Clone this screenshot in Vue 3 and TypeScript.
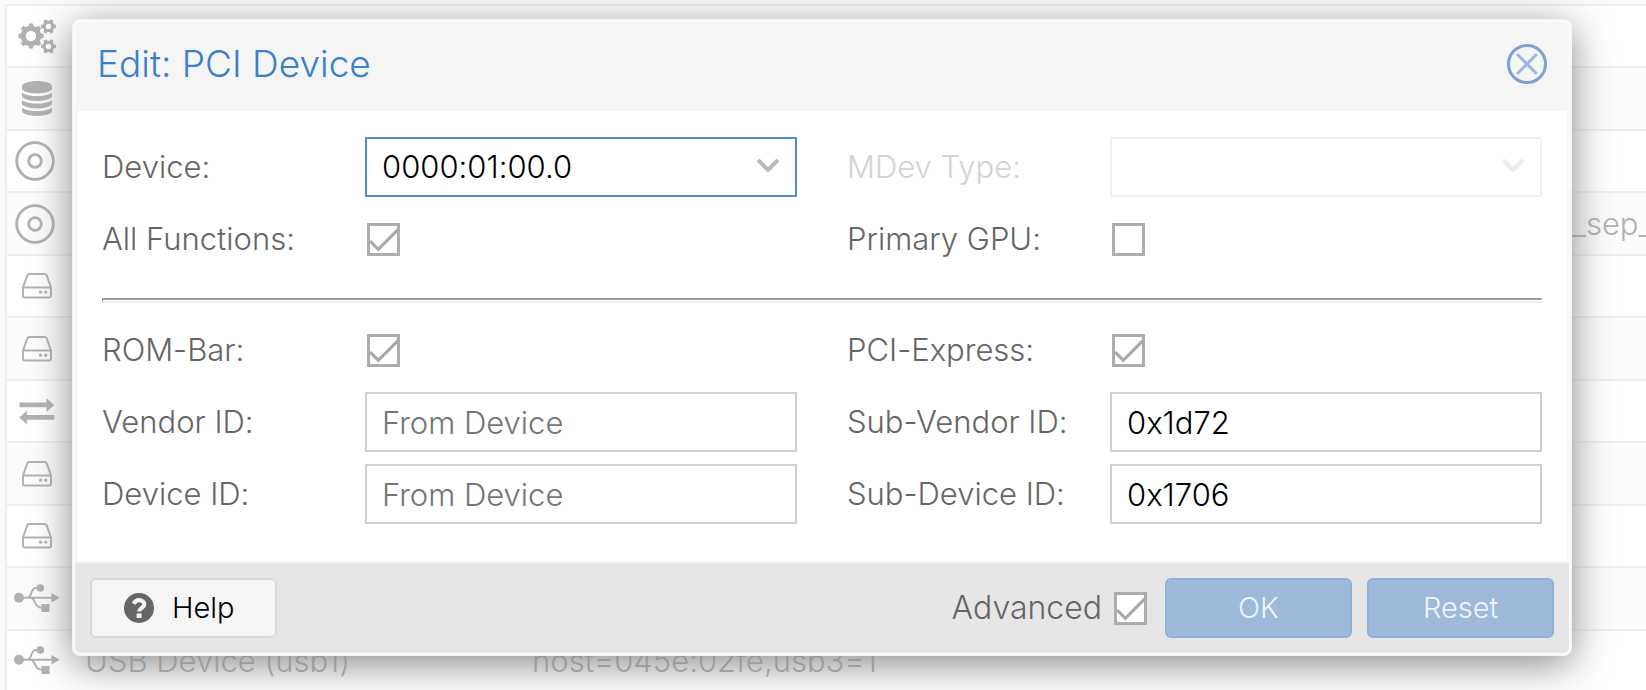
<script setup lang="ts">
import { reactive } from 'vue'

type IconName = 'gears' | 'database' | 'disc' | 'disk' | 'network' | 'usb'

interface HardwareRow {
  icon: IconName
  name?: string
  value?: string
  tail?: string
}

interface Gear {
  cx: number
  cy: number
  outer: number
  inner: number
  hole: number
  teeth: number
}

const rows: HardwareRow[] = [
  { icon: 'gears' },
  { icon: 'database' },
  { icon: 'disc' },
  { icon: 'disc', tail: '_sep_' },
  { icon: 'disk' },
  { icon: 'disk' },
  { icon: 'network' },
  { icon: 'disk' },
  { icon: 'disk' },
  { icon: 'usb' },
  { icon: 'usb', name: 'USB Device (usb1)', value: 'host=045e:02fe,usb3=1' },
]

const gears: Gear[] = [
  { cx: 13, cy: 17, outer: 12.7, inner: 10.3, hole: 5.2, teeth: 8 },
  { cx: 30.5, cy: 7.4, outer: 7.6, inner: 5.8, hole: 2.7, teeth: 6 },
  { cx: 30.5, cy: 27.4, outer: 7.6, inner: 5.8, hole: 2.7, teeth: 6 },
]

function gearPath(g: Gear): string {
  const step = (Math.PI * 2) / g.teeth
  const points: string[] = []
  for (let i = 0; i < g.teeth; i++) {
    const a = i * step
    const corners: [number, number][] = [
      [g.inner, a - step * 0.3],
      [g.outer, a - step * 0.2],
      [g.outer, a + step * 0.2],
      [g.inner, a + step * 0.3],
    ]
    for (const [r, t] of corners) {
      points.push(`${(g.cx + r * Math.cos(t)).toFixed(2)} ${(g.cy + r * Math.sin(t)).toFixed(2)}`)
    }
  }
  const h = g.hole
  return `M${points.join('L')}ZM${g.cx - h} ${g.cy}a${h} ${h} 0 1 0 ${2 * h} 0a${h} ${h} 0 1 0 ${-2 * h} 0Z`
}

const form = reactive({
  device: '0000:01:00.0',
  mdev: '',
  allFunctions: true,
  primaryGpu: false,
  romBar: true,
  pciExpress: true,
  vendorId: '',
  subVendorId: '0x1d72',
  deviceId: '',
  subDeviceId: '0x1706',
  advanced: true,
})
</script>

<template>
  <div class="page">
    <div class="hardware" aria-hidden="true">
      <div v-for="(row, i) in rows" :key="i" class="hw-row">
        <span class="hw-icon">
          <svg v-if="row.icon === 'gears'" width="38" height="35" viewBox="0 0 38 35">
            <path v-for="(g, n) in gears" :key="n" :d="gearPath(g)" fill="currentColor" fill-rule="evenodd" />
          </svg>
          <svg v-else-if="row.icon === 'database'" width="30" height="35" viewBox="0 0 1536 1792">
            <path
              fill="currentColor"
              d="M768 768q237 0 443-43t325-127v170q0 69-103 128t-280 93.5-385 34.5-385-34.5-280-93.5-103-128v-170q119 84 325 127t443 43zm0 768q237 0 443-43t325-127v170q0 69-103 128t-280 93.5-385 34.5-385-34.5-280-93.5-103-128v-170q119 84 325 127t443 43zm0-384q237 0 443-43t325-127v170q0 69-103 128t-280 93.5-385 34.5-385-34.5-280-93.5-103-128v-170q119 84 325 127t443 43zm0-1152q208 0 385 34.5t280 93.5 103 128v128q0 69-103 128t-280 93.5-385 34.5-385-34.5-280-93.5-103-128v-128q0-69 103-128t280-93.5 385-34.5z"
            />
          </svg>
          <svg v-else-if="row.icon === 'disc'" width="44" height="40" viewBox="0 0 44 40" fill="none" stroke="currentColor" stroke-width="2.8">
            <circle cx="20" cy="20" r="18.3" />
            <circle cx="20" cy="20" r="6.3" />
          </svg>
          <svg v-else-if="row.icon === 'disk'" width="30" height="26" viewBox="0 0 30 26" fill="none" stroke="currentColor" stroke-width="2">
            <path d="M1 14.5 L5.2 2.6 Q5.8 1 7.4 1 H22.6 Q24.2 1 24.8 2.6 L29 14.5 V22.6 Q29 24.6 27 24.6 H3 Q1 24.6 1 22.6 Z M1 14.5 H29" />
            <g fill="currentColor" stroke="none"><circle cx="18.6" cy="19.2" r="1.6" /><circle cx="23.7" cy="19.2" r="1.6" /></g>
          </svg>
          <svg v-else-if="row.icon === 'network'" width="36" height="27" viewBox="0 0 36 27" fill="currentColor">
            <path d="M.5 4.5H27.5V.3L35.3 7 27.5 14V9.3H.5ZM35.3 17H8V12.5L.3 19.5 8 26.5V21.8H35.3Z" />
          </svg>
          <svg v-else width="46" height="30" viewBox="0 0 46 30" fill="none" stroke="currentColor" stroke-width="2">
            <path d="M5 13.7H38M13 13.7C18.5 13.7 16 4 22 4H26M17 13.7C21.5 13.7 20 23.6 27 23.6H29" />
            <g fill="currentColor" stroke="none">
              <circle cx="5" cy="13.7" r="5" />
              <circle cx="26.3" cy="4" r="3.8" />
              <path d="M27.5 20H35.5V28H27.5ZM37.5 9L45.6 13.7 37.5 18.4Z" />
            </g>
          </svg>
        </span>
        <span class="hw-name">{{ row.name }}</span>
        <span class="hw-value">{{ row.value }}</span>
        <span class="hw-tail">{{ row.tail }}</span>
      </div>
    </div>

    <section class="window" role="dialog" aria-labelledby="window-title">
      <header class="titlebar">
        <h1 id="window-title">Edit: PCI Device</h1>
        <button type="button" class="close" aria-label="Close">
          <svg width="40" height="40" viewBox="0 0 40 40" fill="none">
            <circle cx="20" cy="20" r="18.5" stroke="#7ca3d0" stroke-width="3" />
            <path d="M11 11L29 29M29 11L11 29" stroke="#9db6e0" stroke-width="3" stroke-linecap="round" />
          </svg>
        </button>
      </header>

      <form class="body" @submit.prevent>
        <div class="fields">
          <div class="field">
            <label for="device">Device:</label>
            <div class="combo">
              <select id="device" v-model="form.device" class="control focused">
                <option>0000:01:00.0</option>
              </select>
              <svg class="chevron" width="24" height="16" viewBox="0 0 24 16"><path d="M2 2L12 12L22 2" /></svg>
            </div>
          </div>
          <div class="field disabled">
            <label for="mdev">MDev Type:</label>
            <div class="combo">
              <select id="mdev" v-model="form.mdev" class="control" disabled>
                <option value=""></option>
              </select>
              <svg class="chevron" width="24" height="16" viewBox="0 0 24 16"><path d="M2 2L12 12L22 2" /></svg>
            </div>
          </div>
          <div class="field">
            <label for="all-functions">All Functions:</label>
            <span class="check">
              <input id="all-functions" v-model="form.allFunctions" type="checkbox" />
              <svg width="33" height="33" viewBox="0 0 32 32"><path d="M3 17.5L11 25.5L30 6.5" /></svg>
            </span>
          </div>
          <div class="field">
            <label for="primary-gpu">Primary GPU:</label>
            <span class="check">
              <input id="primary-gpu" v-model="form.primaryGpu" type="checkbox" />
              <svg width="33" height="33" viewBox="0 0 32 32"><path d="M3 17.5L11 25.5L30 6.5" /></svg>
            </span>
          </div>
        </div>

        <hr />

        <div class="fields">
          <div class="field">
            <label for="rom-bar">ROM-Bar:</label>
            <span class="check">
              <input id="rom-bar" v-model="form.romBar" type="checkbox" />
              <svg width="33" height="33" viewBox="0 0 32 32"><path d="M3 17.5L11 25.5L30 6.5" /></svg>
            </span>
          </div>
          <div class="field">
            <label for="pci-express">PCI-Express:</label>
            <span class="check">
              <input id="pci-express" v-model="form.pciExpress" type="checkbox" />
              <svg width="33" height="33" viewBox="0 0 32 32"><path d="M3 17.5L11 25.5L30 6.5" /></svg>
            </span>
          </div>
          <div class="field">
            <label for="vendor-id">Vendor ID:</label>
            <input id="vendor-id" v-model="form.vendorId" class="control" type="text" placeholder="From Device" />
          </div>
          <div class="field">
            <label for="sub-vendor-id">Sub-Vendor ID:</label>
            <input id="sub-vendor-id" v-model="form.subVendorId" class="control" type="text" />
          </div>
          <div class="field">
            <label for="device-id">Device ID:</label>
            <input id="device-id" v-model="form.deviceId" class="control" type="text" placeholder="From Device" />
          </div>
          <div class="field">
            <label for="sub-device-id">Sub-Device ID:</label>
            <input id="sub-device-id" v-model="form.subDeviceId" class="control" type="text" />
          </div>
        </div>
      </form>

      <footer class="toolbar">
        <button type="button" class="btn help">
          <svg width="30" height="30" viewBox="0 0 30 30" fill="none">
            <circle cx="15" cy="15" r="15" fill="#666" />
            <path d="M9.7 10.7Q11.7 7.2 15 7.2C18 7.2 20.3 9 20.3 11.3C20.3 15 15.3 14.8 15.3 18.6" stroke="#f5f5f5" stroke-width="4.2" />
            <path d="M12.6 20.5H17.6V25H12.6Z" fill="#f5f5f5" />
          </svg>
          <span>Help</span>
        </button>
        <div class="advanced">
          <label for="advanced">Advanced</label>
          <span class="check">
            <input id="advanced" v-model="form.advanced" type="checkbox" />
            <svg width="33" height="33" viewBox="0 0 32 32"><path d="M3 17.5L11 25.5L30 6.5" /></svg>
          </span>
        </div>
        <button type="button" class="btn primary" disabled>OK</button>
        <button type="button" class="btn primary" disabled>Reset</button>
      </footer>
    </section>
  </div>
</template>

<style>
body {
  margin: 0;
  overflow: hidden;
}
</style>

<style scoped>
.page {
  position: relative;
  box-sizing: border-box;
  min-height: 100vh;
  padding: 4px 0 0 5px;
  background: #fbfbfb;
  color: #666;
  font-family: Inter, "Helvetica Neue", "Liberation Sans", sans-serif;
  font-size: 31px;
  font-weight: 300;
  line-height: 40px;
  font-feature-settings: "calt" 0;
}

.hardware {
  border-left: 2px solid #efefef;
  color: #b1b1b1;
}

.hw-row {
  box-sizing: border-box;
  display: flex;
  align-items: center;
  height: 62px;
  border-top: 2px solid #efefef;
  background: #fff;
  white-space: nowrap;
}

.hw-row:nth-child(even) {
  height: 63px;
  background: #fcfcfc;
}

.hw-icon {
  display: flex;
  justify-content: center;
  width: 60px;
}

.hw-name {
  width: 447px;
  padding-left: 18px;
}

.hw-value {
  flex: 1;
}

.hw-tail {
  width: 74px;
  overflow: hidden;
}

.window {
  position: absolute;
  top: 19px;
  left: 72px;
  right: 74px;
  padding: 1px;
  border: 2px solid #f5f5f5;
  border-radius: 8px;
  background: #fff;
  box-shadow: 0 8px 40px #888;
}

.titlebar {
  display: flex;
  align-items: center;
  justify-content: space-between;
  box-sizing: border-box;
  height: 89px;
  padding: 0 22px 6px;
  border-radius: 5px 5px 0 0;
  background: #f5f5f5;
}

h1 {
  margin: 0;
  color: #3b80ca;
  font-size: 37px;
  font-weight: 300;
  line-height: 48px;
}

.close {
  display: flex;
  padding: 0;
  border: 0;
  background: none;
}

.body {
  padding: 26px 25px 37px;
  border: solid #f5f5f5;
  border-width: 0 2px 2px;
}

.fields {
  display: grid;
  grid-template-columns: 1fr 1fr;
  gap: 12px 50px;
}

.field {
  display: flex;
  align-items: center;
  min-height: 60px;
}

.field > label {
  flex: none;
  width: 263px;
}

.disabled > label {
  color: #d3d3d3;
}

.combo {
  position: relative;
  flex: 1;
  min-width: 0;
}

.control {
  appearance: none;
  box-sizing: border-box;
  display: block;
  flex: 1;
  width: 100%;
  min-width: 0;
  height: 60px;
  margin: 0;
  padding: 0 15px;
  border: 2px solid #cfcfcf;
  border-radius: 0;
  outline: 0;
  background: #fff;
  color: #000;
  font: inherit;
  font-feature-settings: inherit;
}

.control::placeholder {
  color: #757575;
  opacity: 1;
}

.control.focused {
  border-color: #5090d0;
}

.control:disabled {
  border-color: #f0f0f0;
  opacity: 1;
}

.chevron {
  position: absolute;
  top: 21px;
  right: 17px;
  fill: none;
  stroke: #b9b9b9;
  stroke-width: 4;
  pointer-events: none;
}

.disabled .chevron {
  stroke: #ececec;
}

.check {
  display: grid;
  width: 33px;
  height: 33px;
  margin: 2px;
}

.check > * {
  grid-area: 1 / 1;
}

.check input {
  appearance: none;
  box-sizing: border-box;
  width: 33px;
  height: 33px;
  margin: 0;
  border: 3px solid #adadad;
  background: #fff;
}

.check svg {
  fill: none;
  stroke: #a8a8a8;
  stroke-width: 3;
  pointer-events: none;
  visibility: hidden;
}

.check input:checked + svg {
  visibility: visible;
}

hr {
  box-sizing: border-box;
  height: 5px;
  margin: 29px 0 17px;
  border: solid;
  border-width: 2px 1px;
  border-color: #999 #eee #eee #999;
}

.toolbar {
  display: flex;
  align-items: center;
  padding: 15px;
  border-radius: 0 0 5px 5px;
  background: #e6e6e6;
}

.advanced {
  display: flex;
  align-items: center;
  gap: 10px;
  margin: 0 16px 0 auto;
}

.advanced label {
  font-size: 32px;
}

.btn {
  box-sizing: border-box;
  display: flex;
  align-items: center;
  justify-content: center;
  width: 187px;
  height: 60px;
  padding: 0;
  border: 2px solid #d8d8d8;
  border-radius: 6px;
  background: #f5f5f5;
  color: #000;
  font: inherit;
  font-size: 29px;
}

.help {
  justify-content: flex-start;
  gap: 18px;
  padding-left: 32px;
}

.primary {
  border-color: #90b1da;
  background: #9dbadb;
  color: #f0f4f9;
}

.primary + .primary {
  margin-left: 15px;
}
</style>
